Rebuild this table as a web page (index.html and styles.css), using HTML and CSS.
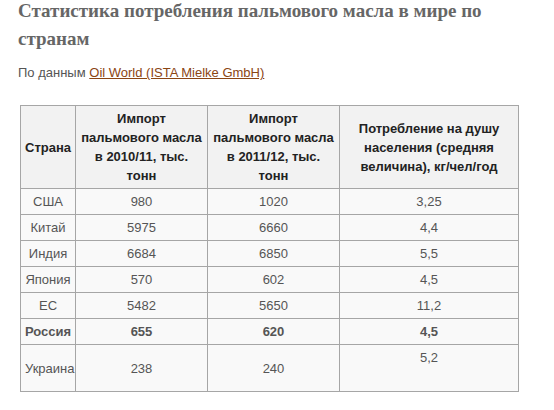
FILE: index.html
```html
<!DOCTYPE html>
<html lang="ru">
<head>
    <meta charset="UTF-8">
    <title>Статистика потребления пальмового масла</title>
    <link rel="stylesheet" href="styles.css">
</head>
<body>
    <h2 class="title">Статистика потребления пальмового масла в мире по странам</h2>
    <p class="source">По данным <a href="#">Oil World (ISTA Mielke GmbH)</a></p>

    <table class="stats">
        <thead>
            <tr>
                <th class="c-country">Страна</th>
                <th class="c-imp">Импорт пальмового масла в 2010/11, тыс. тонн</th>
                <th class="c-imp">Импорт пальмового масла в 2011/12, тыс. тонн</th>
                <th class="c-cons">Потребление на душу населения (средняя величина), кг/чел/год</th>
            </tr>
        </thead>
        <tbody>
            <tr><td>США</td><td>980</td><td>1020</td><td>3,25</td></tr>
            <tr><td>Китай</td><td>5975</td><td>6660</td><td>4,4</td></tr>
            <tr><td>Индия</td><td>6684</td><td>6850</td><td>5,5</td></tr>
            <tr><td>Япония</td><td>570</td><td>602</td><td>4,5</td></tr>
            <tr><td>ЕС</td><td>5482</td><td>5650</td><td>11,2</td></tr>
            <tr class="bold"><td>Россия</td><td>655</td><td>620</td><td>4,5</td></tr>
            <tr class="tall"><td>Украина</td><td>238</td><td>240</td><td class="top">5,2</td></tr>
        </tbody>
    </table>
</body>
</html>
```

FILE: styles.css
```css
body { margin: 0; padding: 0 18px; background: #fff; font-family: "Liberation Sans", Arial, sans-serif; color: #555; }
.title { font-family: "Liberation Serif", "Times New Roman", serif; font-size: 19px; line-height: 28px; font-weight: bold; color: #666; margin: -3px 0 0 0; }
.source { font-size: 13px; line-height: 18px; margin: 11px 0 0 0; color: #555; }
.source a { color: #8b4513; }
.stats { border-collapse: collapse; table-layout: fixed; margin: 23px 0 0 2px; width: 499px; font-size: 13px; line-height: 19px; }
.stats th, .stats td { border: 1px solid #a6a6a6; padding: 3px 4px; text-align: center; vertical-align: middle; }
.stats th { background: #f2f2f2; color: #222; font-weight: bold; }
.stats td { background: #f9f9f9; }
.c-country { width: 46px; }
.c-imp { width: 123px; }
.c-cons { width: 170px; }
.stats tr.bold td { font-weight: bold; }
.stats tr.tall td { height: 40px; }
.stats td.top { vertical-align: top; }
```
